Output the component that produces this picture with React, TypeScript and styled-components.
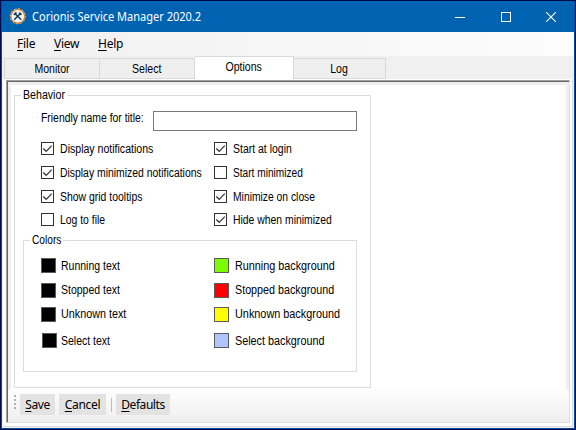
import React from 'react';
import styled, { createGlobalStyle } from 'styled-components';

const Global = createGlobalStyle`
  * { box-sizing: border-box; }
  body { margin: 0; background: #00104f; overflow: hidden; }
`;

const sans = "'Liberation Sans', Arial, sans-serif";
const ui = "'Noto Sans', 'Open Sans', sans-serif";

const Frame = styled.div`
  width: 576px;
  height: 430px;
  border: 1px solid #000b4e;
`;

const Window = styled.div`
  height: 100%;
  display: flex;
  flex-direction: column;
  background: #f0f0f0;
  border: solid #0b4c9c;
  border-width: 0 1px 1px;
  color: #000;
  font: 12px ${sans};
  white-space: nowrap;
`;

const TitleBar = styled.header`
  height: 31px;
  flex: none;
  display: flex;
  align-items: center;
  background: #0063b1;
  color: #fff;
  padding-left: 7px;
`;

const Title = styled.span`
  flex: 1;
  margin-left: 6px;
  font: 12px/16px ${ui};
`;

const Condensed = styled.span<{ $k: number; $center?: boolean }>`
  display: inline-block;
  transform: scaleX(${(p) => p.$k});
  transform-origin: ${(p) => (p.$center ? 'center' : 'left')};
`;

const Caption = styled.div`
  display: grid;
  grid-template-columns: 46px 45px 45px;
  justify-items: center;
  margin-right: 1px;
  svg { display: block; }
`;

const MenuBar = styled.nav`
  height: 24px;
  flex: none;
  display: grid;
  grid-template-columns: 37px 44px 60px;
  align-items: center;
  padding-left: 15px;
  background: linear-gradient(90deg, #f0f0f0, #fcfcfc);
  font: 12px/16px ${ui};
  letter-spacing: -0.25px;
`;

const MenuItem = styled.span``;

const Mnemonic = styled.span`
  text-decoration: underline;
  text-underline-offset: 2px;
  text-decoration-thickness: 1px;
  text-decoration-skip-ink: none;
`;

const TabStrip = styled.div`
  height: 23px;
  flex: none;
  display: flex;
  align-items: flex-end;
  padding-left: 2px;
`;

const Tab = styled.div<{ $w: number; $active?: boolean }>`
  width: ${(p) => p.$w}px;
  height: ${(p) => (p.$active ? 23 : 21)}px;
  line-height: ${(p) => (p.$active ? 21 : 20)}px;
  text-align: center;
  background: ${(p) => (p.$active ? '#fff' : '#efefef')};
  border: 1px solid #d9d9d9;
  border-left-width: ${(p) => (p.$active ? 0 : 1)}px;
  border-bottom-width: ${(p) => (p.$active ? 0 : 1)}px;
  & + & { border-left-width: 0; }
`;

const TabPage = styled.section`
  flex: 1;
  min-height: 0;
  background: #fff;
  border: solid #dcdcdc;
  border-width: 0 1px 1px 0;
  margin: 0 1px 1px 1px;
  padding: 1px 2px 3px 3px;
`;

const Sunken = styled.div`
  height: 100%;
  display: flex;
  flex-direction: column;
  background: #efefef;
  border: 1px solid;
  border-color: #a0a0a0 #dedede #dedede #a0a0a0;
`;

const SunkenInner = styled.div`
  flex: 1;
  min-height: 0;
  display: flex;
  flex-direction: column;
  border: solid #696969;
  border-width: 1px 0 0 1px;
`;

const Sheet = styled.div`
  flex: 1;
  background: #fff;
  margin: 3px 3px 0;
  padding: 3px 0 0 3px;
`;

const Group = styled.fieldset<{ $w: number; $h: number }>`
  width: ${(p) => p.$w}px;
  height: ${(p) => p.$h}px;
  margin: 0;
  padding: 0;
  min-width: 0;
  border: 1px solid #dcdcdc;
`;

const Legend = styled.legend<{ $w: number }>`
  width: ${(p) => p.$w}px;
  height: 14px;
  line-height: 14px;
  margin-left: 6px;
  padding: 0 0 0 2px;
`;

const NameRow = styled.label`
  height: 20px;
  display: grid;
  grid-template-columns: 112px 204px;
  margin: 9px 0 0 26px;
`;

const TextBox = styled.input`
  height: 20px;
  border: 1px solid #7a7a7a;
  background: #fff;
  padding: 0 3px;
  font: 12px ${sans};
`;

const Options = styled.div`
  display: grid;
  grid-template-columns: 173px 150px;
  grid-template-rows: 24px 24px 23px 20px;
  margin: 11px 0 0 26px;
`;

const Option = styled.label`
  height: 13px;
  display: flex;
  gap: 6px;
`;

const CheckBox = styled.span`
  width: 13px;
  height: 13px;
  flex: none;
  border: 1px solid #333;
  background: #fff;
  svg { display: block; }
`;

const Text = styled(Condensed)<{ $low?: boolean }>`
  line-height: ${(p) => (p.$low ? 16 : 14)}px;
`;

const ColorsWrap = styled.div`
  margin: 0 0 0 8px;
`;

const Colors = styled.div`
  display: grid;
  grid-template-columns: 173px 140px;
  grid-template-rows: 25px 24px 26px 16px;
  margin: 11px 0 0 17px;
`;

const ColorRow = styled.div<{ $indent?: boolean }>`
  height: 15px;
  display: flex;
  gap: ${(p) => (p.$indent ? 4 : 5)}px;
  padding-left: ${(p) => (p.$indent ? 1 : 0)}px;
  &:nth-child(even) { gap: 6px; }
`;

const Swatch = styled.span<{ $c: string }>`
  width: 15px;
  height: 15px;
  flex: none;
  background: ${(p) => p.$c};
  border: 1px solid #5a5a5a;
`;

const ToolBar = styled.footer`
  height: 32px;
  flex: none;
  display: flex;
  align-items: flex-start;
  padding: 4px 0 0 6px;
  background: linear-gradient(#fdfdfd, #efefef);
`;

const Grip = styled.span`
  width: 2px;
  height: 15px;
  margin: 1px 4px 0 0;
  background: repeating-linear-gradient(#b0b0b0 0 2px, transparent 2px 4px);
`;

const ToolButton = styled.button<{ $w: number; $ls: number }>`
  width: ${(p) => p.$w}px;
  height: 21px;
  padding: 0;
  border: 0;
  background: #e3e3e3;
  color: #000;
  text-align: center;
  font: 12px/21px ${ui};
  letter-spacing: ${(p) => p.$ls}px;
`;

const Separator = styled.span`
  width: 1px;
  height: 14px;
  margin: 4px 4px 0 5px;
  background: #bdbdbd;
`;

const Spacer = styled.span<{ $w: number }>`
  width: ${(p) => p.$w}px;
`;

const AppIcon = () => (
  <svg width="17" height="17" viewBox="0 0 17 17">
    <circle cx="8.8" cy="8.3" r="7" fill="#f4f7fa" stroke="#cf873a" strokeWidth="1.5" />
    <circle cx="8.8" cy="8.3" r="7.6" fill="none" stroke="#f0dcc0" strokeWidth="0.8" strokeDasharray="1.2 2.8" />
    <path d="M6.2 5.8l6 6M11.4 5.4L5.2 11.8" stroke="#1b3550" strokeWidth="1.5" />
    <path d="M4.8 7l2.6-2.7M10.2 4.6l2.3 2.2" stroke="#1b3550" strokeWidth="1.7" />
  </svg>
);

const Check = () => (
  <svg width="11" height="11" viewBox="0 0 11 11">
    <path d="M1.3 5.5L4.2 8.3L9.8 2.7" fill="none" stroke="#333" strokeWidth="1.2" />
  </svg>
);

const options = [
  { text: 'Display notifications', on: true, k: 0.88 },
  { text: 'Start at login', on: true, k: 0.873 },
  { text: 'Display minimized notifications', on: true, k: 0.867 },
  { text: 'Start minimized', on: false, k: 0.845 },
  { text: 'Show grid tooltips', on: true, k: 0.87 },
  { text: 'Minimize on close', on: true, k: 0.86 },
  { text: 'Log to file', on: false, k: 0.865 },
  { text: 'Hide when minimized', on: true, k: 0.866 },
];

const colors = [
  { text: 'Running text', c: '#000', k: 0.875, low: true },
  { text: 'Running background', c: '#7cfc00', k: 0.9, low: true },
  { text: 'Stopped text', c: '#000', k: 0.875 },
  { text: 'Stopped background', c: '#ff0000', k: 0.895 },
  { text: 'Unknown text', c: '#000', k: 0.898 },
  { text: 'Unknown background', c: '#ffff00', k: 0.905 },
  { text: 'Select text', c: '#000', k: 0.875, indent: true, low: true },
  { text: 'Select background', c: '#b0c4ff', k: 0.9, low: true },
];

export default function App() {
  return (
    <>
      <Global />
      <Frame>
        <Window>
          <TitleBar>
            <AppIcon />
            <Title><Condensed $k={0.918}>Corionis Service Manager 2020.2</Condensed></Title>
            <Caption>
              <svg width="10" height="10"><path d="M0 5.5h10" stroke="#fff" /></svg>
              <svg width="10" height="10"><rect x=".5" y=".5" width="9" height="9" fill="none" stroke="#fff" /></svg>
              <svg width="10" height="10"><path d="M0 0l10 10M10 0L0 10" stroke="#fff" strokeWidth="1.1" /></svg>
            </Caption>
          </TitleBar>
          <MenuBar>
            <MenuItem><Mnemonic>F</Mnemonic>ile</MenuItem>
            <MenuItem><Mnemonic>V</Mnemonic>iew</MenuItem>
            <MenuItem><Mnemonic>H</Mnemonic>elp</MenuItem>
          </MenuBar>
          <TabStrip>
            <Tab $w={96}><Condensed $k={0.88} $center>Monitor</Condensed></Tab>
            <Tab $w={95}><Condensed $k={0.88} $center>Select</Condensed></Tab>
            <Tab $w={99} $active><Condensed $k={0.88} $center>Options</Condensed></Tab>
            <Tab $w={92}><Condensed $k={0.88} $center>Log</Condensed></Tab>
          </TabStrip>
          <TabPage>
            <Sunken>
              <SunkenInner>
                <Sheet>
                  <Group $w={357} $h={300}>
                    <Legend $w={46}><Text $k={0.885}>Behavior</Text></Legend>
                    <NameRow>
                      <Text $k={0.865}>Friendly name for title:</Text>
                      <TextBox />
                    </NameRow>
                    <Options>
                      {options.map((o) => (
                        <Option key={o.text}>
                          <CheckBox>{o.on && <Check />}</CheckBox>
                          <Text $k={o.k}>{o.text}</Text>
                        </Option>
                      ))}
                    </Options>
                    <ColorsWrap>
                      <Group $w={334} $h={139}>
                        <Legend $w={33}><Text $k={0.85}>Colors</Text></Legend>
                        <Colors>
                          {colors.map((c) => (
                            <ColorRow key={c.text} $indent={c.indent}>
                              <Swatch $c={c.c} />
                              <Text $k={c.k} $low={c.low}>{c.text}</Text>
                            </ColorRow>
                          ))}
                        </Colors>
                      </Group>
                    </ColorsWrap>
                  </Group>
                </Sheet>
                <ToolBar>
                  <Grip />
                  <ToolButton $w={35} $ls={-0.4}><Mnemonic>S</Mnemonic>ave</ToolButton>
                  <Spacer $w={4} />
                  <ToolButton $w={47} $ls={-0.3}><Mnemonic>C</Mnemonic>ancel</ToolButton>
                  <Separator />
                  <ToolButton $w={54} $ls={-0.45}><Mnemonic>D</Mnemonic>efaults</ToolButton>
                </ToolBar>
              </SunkenInner>
            </Sunken>
          </TabPage>
        </Window>
      </Frame>
    </>
  );
}
